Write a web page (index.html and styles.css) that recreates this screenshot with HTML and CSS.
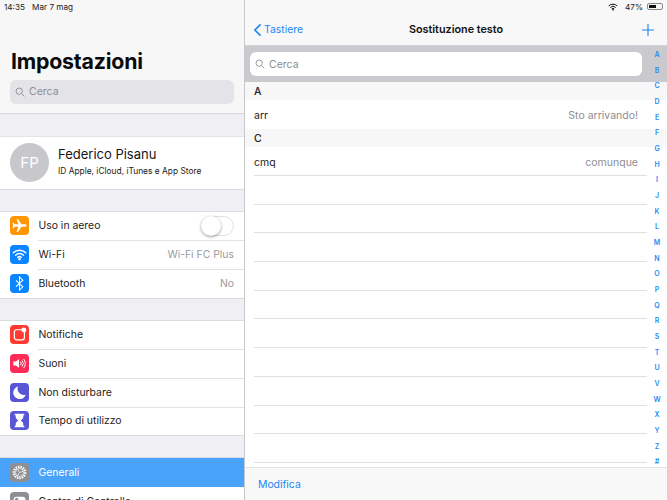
FILE: index.html
```html
<!DOCTYPE html>
<html lang="it">
<head>
<meta charset="utf-8">
<title>Sostituzione testo</title>
<link rel="stylesheet" href="styles.css">
</head>
<body>
<div class="app">
  <aside class="sidebar">
    <header class="side-head">
      <div class="status-left"><span>14:35</span><span>Mar 7 mag</span></div>
      <h1>Impostazioni</h1>
      <div class="side-search">
        <svg class="glass" viewBox="0 0 12 12"><circle cx="5" cy="5" r="3.8"/><path d="M8 8l3.2 3.2"/></svg>
        <span>Cerca</span>
      </div>
    </header>
    <section class="profile">
      <div class="avatar">FP</div>
      <div class="who">
        <div class="name">Federico Pisanu</div>
        <div class="sub">ID Apple, iCloud, iTunes e App Store</div>
      </div>
    </section>
    <section class="group">
      <div class="row">
        <span class="ico orange"><svg viewBox="0 0 20 20"><path fill="#fff" d="M17.5 10c0-.8-.9-1.2-1.8-1.2h-3.6L8.4 3.2H6.9l1.9 5.6H5L3.8 7.2H2.6l.7 2.8-.7 2.8h1.2L5 11.2h3.8l-1.9 5.6h1.5l3.7-5.6h3.6c.9 0 1.8-.4 1.8-1.2z"/></svg></span>
        <span class="label">Uso in aereo</span>
        <span class="switch"><span class="knob"></span></span>
      </div>
      <div class="row">
        <span class="ico blue"><svg viewBox="0 0 20 20" fill="none" stroke="#fff" stroke-width="1.6" stroke-linecap="round"><path d="M3.5 8.2a9.2 9.2 0 0 1 13 0"/><path d="M5.9 10.7a5.8 5.8 0 0 1 8.2 0"/><path d="M8.2 12.9a2.6 2.6 0 0 1 3.6 0"/><circle cx="10" cy="14.8" r=".6" fill="#fff"/></svg></span>
        <span class="label">Wi-Fi</span>
        <span class="value">Wi-Fi FC Plus</span>
      </div>
      <div class="row">
        <span class="ico blue"><svg viewBox="0 0 20 20" fill="none" stroke="#fff" stroke-width="1.1"><path d="M6.3 6.6l7.2 6.9-3.500 3.400V3.100l3.500 3.400-7.200 6.900"/></svg></span>
        <span class="label">Bluetooth</span>
        <span class="value">No</span>
      </div>
    </section>
    <section class="group">
      <div class="row">
        <span class="ico red"><svg viewBox="0 0 20 20"><rect x="4.6" y="5" width="10.6" height="10.6" rx="2.4" fill="none" stroke="#fff" stroke-width="1.3"/><circle cx="14.6" cy="5.2" r="2.6" fill="#fff"/></svg></span>
        <span class="label">Notifiche</span>
      </div>
      <div class="row">
        <span class="ico pink"><svg viewBox="0 0 20 20" fill="none" stroke="#fff" stroke-width="1"><path fill="#fff" stroke="none" d="M3.5 8h2.6l3.4-2.6v9.2L6.1 12H3.5z"/><path d="M11 8.2a2.6 2.6 0 0 1 0 3.6M12.6 6.8a4.8 4.8 0 0 1 0 6.4M14.3 5.3a7 7 0 0 1 0 9.4"/></svg></span>
        <span class="label">Suoni</span>
      </div>
      <div class="row">
        <span class="ico indigo"><svg viewBox="0 0 20 20"><path fill="#fff" d="M8.4 3.8a6.7 6.7 0 1 0 8.1 8.6A6.6 6.6 0 0 1 8.4 3.8z"/></svg></span>
        <span class="label">Non disturbare</span>
      </div>
      <div class="row">
        <span class="ico indigo"><svg viewBox="0 0 20 20"><path fill="#fff" d="M5 3h10v1.600h-1v1.600c0 1.600-1.600 2.800-2.700 3.800 1.100 1 2.700 2.200 2.700 3.800v1.600h1V17H5v-1.600h1v-1.600c0-1.600 1.600-2.800 2.700-3.800C7.600 9 6 7.800 6 6.200V4.600H5z"/></svg></span>
        <span class="label">Tempo di utilizzo</span>
      </div>
    </section>
    <section class="group">
      <div class="row selected">
        <span class="ico gray"><svg viewBox="0 0 20 20" fill="none" stroke="#fff"><circle cx="10" cy="10" r="6" stroke-width="2.4" stroke-dasharray="1.6 1"/><circle cx="10" cy="10" r="4.2" stroke-width=".8"/><path stroke-width=".8" d="M10 10l3.600-1.200M10 10l-2 3.400M10 10L8 6.600"/></svg></span>
        <span class="label">Generali</span>
      </div>
      <div class="row">
        <span class="ico gray"><svg viewBox="0 0 20 20"><rect x="3.800" y="5" width="12.400" height="5.600" rx="2.800" fill="#fff"/><circle cx="7" cy="7.800" r="1.800" fill="#8e8e93"/></svg></span>
        <span class="label">Centro di Controllo</span>
      </div>
    </section>
  </aside>

  <main class="detail">
    <header class="nav">
      <div class="status-right">
        <svg class="st-wifi" viewBox="0 0 14 10" fill="none" stroke="#111" stroke-width="1.400"><path d="M1 3.500a8.500 8.500 0 0 1 12 0"/><path d="M3.200 5.700a5.400 5.400 0 0 1 7.600 0"/><path d="M5.300 7.700a2.400 2.400 0 0 1 3.400 0"/><circle cx="7" cy="9" r=".5" fill="#111"/></svg>
        <span>47%</span>
        <span class="battery"><span class="charge"></span></span>
      </div>
      <div class="nav-bar">
        <a class="back"><svg viewBox="0 0 10 16" fill="none" stroke="#1b86f5" stroke-width="1.900"><path d="M8.500 1.500L2 8l6.500 6.500"/></svg>Tastiere</a>
        <span class="title">Sostituzione testo</span>
        <svg class="plus" viewBox="0 0 14 14" stroke="#1b86f5" stroke-width="1.100"><path d="M7 1v12M1 7h12"/></svg>
      </div>
    </header>
    <div class="searchbar">
      <div class="search-field">
        <svg class="glass" viewBox="0 0 12 12"><circle cx="5" cy="5" r="3.800"/><path d="M8 8l3.200 3.200"/></svg>
        <span>Cerca</span>
      </div>
    </div>
    <div class="list">
      <div class="sec">A</div>
      <div class="item"><span>arr</span><span class="phrase">Sto arrivando!</span></div>
      <div class="sec">C</div>
      <div class="item"><span>cmq</span><span class="phrase">comunque</span></div>
      <div class="empty"></div><div class="empty"></div><div class="empty"></div><div class="empty"></div><div class="empty"></div>
      <div class="empty"></div><div class="empty"></div><div class="empty"></div><div class="empty"></div><div class="empty"></div>
    </div>
    <footer class="toolbar"><a>Modifica</a></footer>
    <nav class="index">
      <span>A</span><span>B</span><span>C</span><span>D</span><span>E</span><span>F</span><span>G</span><span>H</span><span>I</span><span>J</span><span>K</span><span>L</span><span>M</span><span>N</span><span>O</span><span>P</span><span>Q</span><span>R</span><span>S</span><span>T</span><span>U</span><span>V</span><span>W</span><span>X</span><span>Y</span><span>Z</span><span>#</span>
    </nav>
  </main>
</div>
</body>
</html>
```
FILE: styles.css
```css
* { box-sizing: border-box; }
html, body { margin: 0; padding: 0; height: 100%; overflow: hidden; }
body { font-family: "Inter", "Liberation Sans", sans-serif; color: #111; background: #efeff4; }
.app { display: flex; width: 667px; height: 500px; overflow: hidden; }

.sidebar { width: 245px; height: 500px; flex: none; background: #efeff4; border-right: 1px solid #c8c8cc; overflow: hidden; }
.side-head { height: 114px; background: #f7f7f8; border-bottom: 1px solid #d6d6da; padding: 2px 0 0 4px; }
.status-left { display: flex; gap: 7px; font-size: 8.2px; line-height: 10px; color: #222; }
h1 { margin: 36px 0 0 7px; font-size: 21.300px; line-height: 26px; font-weight: 700; color: #0a0a0a; letter-spacing: -.2px; }
.side-search { display: flex; align-items: center; gap: 4px; margin: 6px 10px 0 6px; height: 23.500px; padding-left: 5px; background: #e3e3e8; border-radius: 6px; color: #8e8e93; font-size: 10.500px; }
.glass { width: 10px; height: 10px; fill: none; stroke: #8e8e93; stroke-width: 1.100; flex: none; }

.profile { display: flex; align-items: center; margin-top: 23px; height: 51.500px; background: #fff; box-shadow: 0 -1px 0 #e4e4e8, 0 1px 0 #dcdce0; padding-left: 10px; gap: 9px; }
.avatar { width: 39px; height: 39px; border-radius: 50%; background: #c7c7cc; color: #fff; font-size: 15px; display: flex; align-items: center; justify-content: center; flex: none; }
.who { padding-bottom: 2px; }
.name { font-size: 13px; line-height: 17px; color: #151515; }
.sub { font-size: 8.400px; line-height: 12px; margin-top: 2px; color: #222; }

.group { margin-top: 23px; background: #fff; box-shadow: 0 -1px 0 #dcdce0, 0 1px 0 #dcdce0; }
.row { display: flex; align-items: center; height: 28.700px; padding: 0 10px; position: relative; font-size: 10.400px; color: #222; }
.row + .row::before { content: ""; position: absolute; top: 0; left: 38px; right: 0; height: 1px; background: #e2e2e6; }
.ico { width: 19px; height: 19px; border-radius: 4px; flex: none; display: flex; }
.ico svg { width: 19px; height: 19px; }
.orange { background: #ff9500; }
.blue { background: #0a84ff; }
.red { background: #ff3b30; }
.pink { background: #ff2d55; }
.indigo { background: #5856d6; }
.gray { background: #8e8e93; }
.label { margin-left: 9.500px; flex: 1; }
.value { color: #9a9a9f; }
.switch { width: 33px; height: 20px; border-radius: 10px; border: 1px solid #e2e2e6; background: #fff; position: relative; }
.knob { position: absolute; left: -1px; top: -1px; width: 20px; height: 20px; border-radius: 50%; background: #fff; box-shadow: 0 1px 3px rgba(0,0,0,.4); }
.selected { background: #4aa3fb; color: #fff; }
.row.selected + .row::before { display: none; }

.detail { width: 422px; height: 500px; flex: none; position: relative; background: #fff; display: flex; flex-direction: column; overflow: hidden; }
.nav { height: 46px; flex: none; background: #f8f8f8; border-bottom: 1px solid #d2d2d6; }
.status-right { height: 12px; display: flex; justify-content: flex-end; align-items: center; gap: 4px; padding: 1px 4px 0 0; font-size: 8.200px; color: #222; }
.st-wifi { width: 10px; height: 8px; margin-right: 3px; }
.battery { width: 16px; height: 7px; border: 1px solid #888; border-radius: 2px; padding: 1px; display: block; }
.charge { display: block; width: 7px; height: 3px; background: #111; }
.nav-bar { height: 33px; display: flex; align-items: center; justify-content: space-between; padding: 2px 12px 0 8px; position: relative; }
.back { display: flex; align-items: center; gap: 2px; color: #1b86f5; font-size: 10.400px; }
.back svg { width: 9px; height: 14px; }
.title { position: absolute; left: 0; right: 0; text-align: center; font-size: 10.800px; font-weight: 600; color: #111; }
.plus { width: 14px; height: 14px; }
.searchbar { height: 36px; flex: none; background: #c9c9ce; padding: 6px 25px 6px 5px; }
.search-field { height: 24px; background: #fff; border-radius: 6px; display: flex; align-items: center; gap: 4px; padding-left: 5px; color: #8e8e93; font-size: 10.500px; }
.list { flex: 1; overflow: hidden; }
.sec { height: 18px; background: #f7f7f7; font-size: 10.500px; font-weight: 500; line-height: 19px; padding-left: 9px; color: #222; }
.item { height: 29px; display: flex; justify-content: space-between; align-items: center; padding: 1px 29px 0 9px; font-size: 10.500px; color: #222; }
.phrase { color: #8e8e93; }
.item:nth-child(4), .empty { position: relative; }
.item:nth-child(4)::after, .empty::after { content: ""; position: absolute; left: 9px; right: 20px; bottom: 0; height: 1px; background: #e0e0e3; }
.empty { height: 28.700px; }
.toolbar { height: 33px; flex: none; background: #f8f8f8; border-top: 1px solid #e2e2e5; display: flex; align-items: center; padding: 0 0 0 13px; }
.toolbar a { color: #1b86f5; font-size: 10.400px; }
.index { position: absolute; top: 47px; right: 0; width: 20px; display: flex; flex-direction: column; align-items: center; color: #2a8bf7; font-size: 7px; font-weight: 600; }
.index span { height: 15.680px; line-height: 15.680px; }
```
